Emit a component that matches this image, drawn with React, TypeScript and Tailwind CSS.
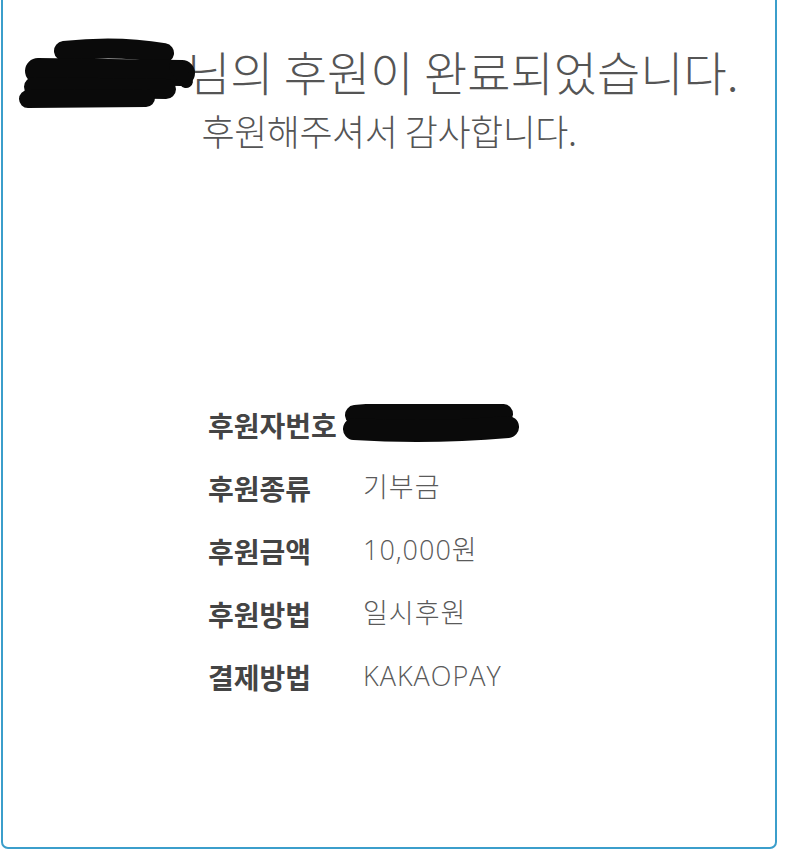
import React from "react";

const KR = "font-['Noto_Sans_CJK_KR','Noto_Sans',sans-serif]";
const VAL = "font-['Open_Sans','Noto_Sans_CJK_KR',sans-serif]";

function NameBlot() {
  return (
    <svg
      className="absolute left-[-4px] top-[-4px] pointer-events-none"
      width="185"
      height="80"
      viewBox="0 0 185 80"
    >
      <g stroke="#0a0a0a" strokeLinecap="round" fill="none">
        <path d="M 48 14 Q 100 8 148 16" strokeWidth="20" />
        <path d="M 22 34 L 166 36" strokeWidth="26" />
        <path d="M 160 30 L 170 44" strokeWidth="14" />
        <path d="M 18 50 L 150 52" strokeWidth="20" />
        <path d="M 12 62 L 130 61" strokeWidth="18" />
      </g>
    </svg>
  );
}

function NumberBlot() {
  return (
    <svg
      className="absolute left-[135px] top-[11px] pointer-events-none"
      width="176"
      height="40"
      viewBox="0 0 176 40"
    >
      <g stroke="#0a0a0a" strokeLinecap="round" fill="none">
        <path d="M 12 11 Q 85 4 160 10" strokeWidth="20" />
        <path d="M 11 25 Q 85 30 165 23" strokeWidth="22" />
      </g>
    </svg>
  );
}

const rows: { label: string; value: string }[] = [
  { label: "후원종류", value: "기부금" },
  { label: "후원금액", value: "10,000원" },
  { label: "후원방법", value: "일시후원" },
  { label: "결제방법", value: "KAKAOPAY" },
];

export default function App() {
  return (
    <div className={`w-[800px] h-[857px] bg-white overflow-hidden ${KR}`}>
      <div className="ml-px -mt-[12px] w-[776px] h-[861px] border-2 border-[#3b9ecb] rounded-[7px] bg-white">
        <div className="pt-[51px] text-[#555555]">
          <div className="flex items-center pl-[17px] text-[47px] leading-[60px] font-light">
            <span className="relative inline-block w-[167px] h-[60px]">
              <span className="block pl-[42px] text-[26px] leading-[60px] text-[#0a0a0a]">홍길동</span>
              <NameBlot />
            </span>
            <span>님의 후원이 완료되었습니다.</span>
          </div>
          <div className="mt-[7px] text-center text-[36px] leading-[44px] font-light tracking-[-0.5px]">
            후원해주셔서 감사합니다.
          </div>
        </div>

        <div className="mt-[241px] pl-[205px] flex flex-col">
          <div className="relative h-[63px] flex items-center">
            <span className="w-[145px] text-[28px] font-bold text-[#444444]">후원자번호</span>
            <span className="text-[16px] text-[#0a0a0a]">0000000000</span>
            <NumberBlot />
          </div>
          {rows.map((r) => (
            <div key={r.label} className="h-[63px] flex items-center">
              <span className="w-[155px] text-[28px] font-bold text-[#444444]">{r.label}</span>
              <span className={`${VAL} text-[27px] font-light text-[#5a5a5a] tracking-[1px]`}>
                {r.value}
              </span>
            </div>
          ))}
        </div>
      </div>
    </div>
  );
}
